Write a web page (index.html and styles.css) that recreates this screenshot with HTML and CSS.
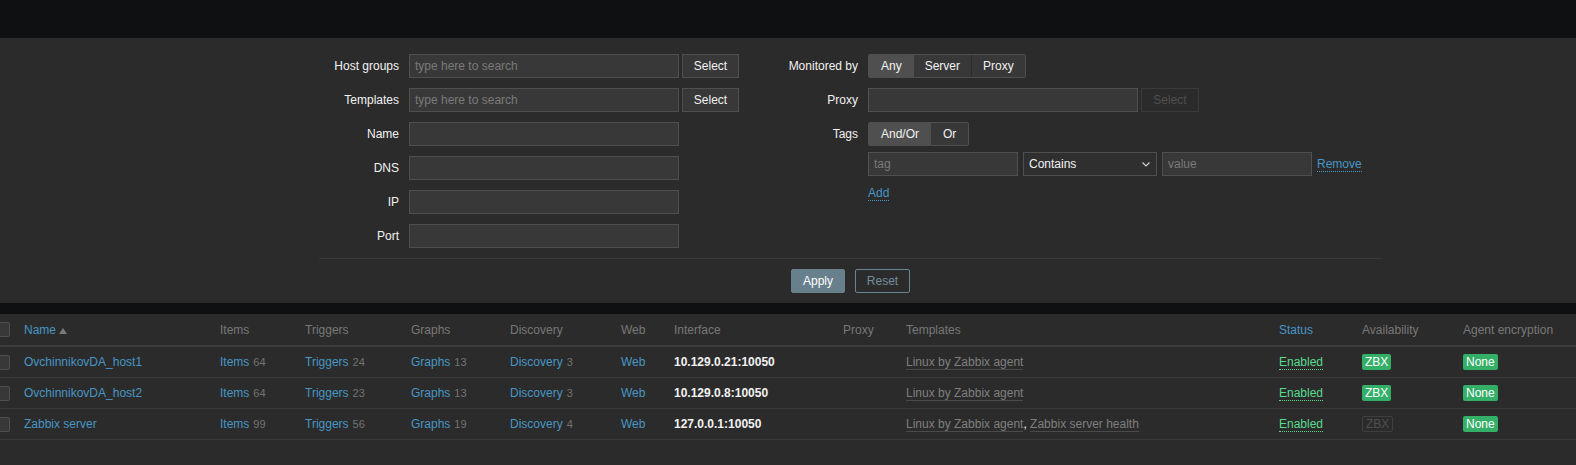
FILE: index.html
```html
<!DOCTYPE html>
<html lang="en">
<head>
<meta charset="utf-8">
<title>Hosts</title>
<link rel="stylesheet" href="styles.css">
</head>
<body>
<div class="topbar"></div>
<form class="filter">
  <div class="filter-inner">
    <div class="filter-cols">
      <div class="col col-left">
        <div class="row"><label class="lbl">Host groups</label><input class="inp w270" placeholder="type here to search"><button type="button" class="btn-sel">Select</button></div>
        <div class="row"><label class="lbl">Templates</label><input class="inp w270" placeholder="type here to search"><button type="button" class="btn-sel">Select</button></div>
        <div class="row"><label class="lbl">Name</label><input class="inp w270"></div>
        <div class="row"><label class="lbl">DNS</label><input class="inp w270"></div>
        <div class="row"><label class="lbl">IP</label><input class="inp w270"></div>
        <div class="row"><label class="lbl">Port</label><input class="inp w270"></div>
      </div>
      <div class="col col-right">
        <div class="row"><label class="lbl">Monitored by</label>
          <div class="seg"><span class="seg-item on">Any</span><span class="seg-item narrow">Server</span><span class="seg-item narrow sep">Proxy</span></div>
        </div>
        <div class="row"><label class="lbl">Proxy</label><input class="inp w270"><button type="button" class="btn-sel disabled" disabled>Select</button></div>
        <div class="row row-tags"><label class="lbl">Tags</label>
          <div class="seg"><span class="seg-item on">And/Or</span><span class="seg-item">Or</span></div>
        </div>
        <div class="row row-tag"><span class="lbl"></span>
          <input class="inp w150" placeholder="tag">
          <button type="button" class="zselect"><span>Contains</span><svg width="8" height="5" viewBox="0 0 8 5"><path d="M0.5 0.5 L4 4 L7.5 0.5" fill="none" stroke="#d8d8d8" stroke-width="1.1"/></svg></button>
          <input class="inp w150" placeholder="value">
          <a class="dlink" href="#">Remove</a>
        </div>
        <div class="row row-add"><span class="lbl"></span><a class="dlink" href="#">Add</a></div>
      </div>
    </div>
    <div class="filter-sep"></div>
    <div class="filter-actions">
      <button type="button" class="btn-apply">Apply</button>
      <button type="button" class="btn-reset">Reset</button>
    </div>
  </div>
</form>
<div class="band"></div>
<table class="list">
  <colgroup>
    <col class="c0"><col class="c1"><col class="c2"><col class="c3"><col class="c4"><col class="c5"><col class="c6"><col class="c7"><col class="c8"><col class="c9"><col class="c10"><col class="c11"><col class="c12">
  </colgroup>
  <thead>
    <tr>
      <th><span class="cb"></span></th>
      <th><a class="link" href="#">Name</a><svg class="sort" width="8" height="6" viewBox="0 0 8 6"><polygon points="4,0 8,6 0,6" fill="#7a7a7a"/></svg></th>
      <th>Items</th>
      <th>Triggers</th>
      <th>Graphs</th>
      <th>Discovery</th>
      <th>Web</th>
      <th>Interface</th>
      <th>Proxy</th>
      <th>Templates</th>
      <th><a class="link" href="#">Status</a></th>
      <th>Availability</th>
      <th>Agent encryption</th>
    </tr>
  </thead>
  <tbody>
    <tr>
      <td><span class="cb"></span></td>
      <td><a class="link" href="#">OvchinnikovDA_host1</a></td>
      <td><a class="link" href="#">Items</a><span class="cnt">64</span></td>
      <td><a class="link" href="#">Triggers</a><span class="cnt">24</span></td>
      <td><a class="link" href="#">Graphs</a><span class="cnt">13</span></td>
      <td><a class="link" href="#">Discovery</a><span class="cnt">3</span></td>
      <td><a class="link" href="#">Web</a></td>
      <td class="iface">10.129.0.21:10050</td>
      <td></td>
      <td><a class="tpl" href="#">Linux by Zabbix agent</a></td>
      <td><a class="enabled" href="#">Enabled</a></td>
      <td><span class="badge">ZBX</span></td>
      <td><span class="badge">None</span></td>
    </tr>
    <tr>
      <td><span class="cb"></span></td>
      <td><a class="link" href="#">OvchinnikovDA_host2</a></td>
      <td><a class="link" href="#">Items</a><span class="cnt">64</span></td>
      <td><a class="link" href="#">Triggers</a><span class="cnt">23</span></td>
      <td><a class="link" href="#">Graphs</a><span class="cnt">13</span></td>
      <td><a class="link" href="#">Discovery</a><span class="cnt">3</span></td>
      <td><a class="link" href="#">Web</a></td>
      <td class="iface">10.129.0.8:10050</td>
      <td></td>
      <td><a class="tpl" href="#">Linux by Zabbix agent</a></td>
      <td><a class="enabled" href="#">Enabled</a></td>
      <td><span class="badge">ZBX</span></td>
      <td><span class="badge">None</span></td>
    </tr>
    <tr>
      <td><span class="cb"></span></td>
      <td><a class="link" href="#">Zabbix server</a></td>
      <td><a class="link" href="#">Items</a><span class="cnt">99</span></td>
      <td><a class="link" href="#">Triggers</a><span class="cnt">56</span></td>
      <td><a class="link" href="#">Graphs</a><span class="cnt">19</span></td>
      <td><a class="link" href="#">Discovery</a><span class="cnt">4</span></td>
      <td><a class="link" href="#">Web</a></td>
      <td class="iface">127.0.0.1:10050</td>
      <td></td>
      <td><a class="tpl" href="#">Linux by Zabbix agent</a><span class="comma">,</span> <a class="tpl" href="#">Zabbix server health</a></td>
      <td><a class="enabled" href="#">Enabled</a></td>
      <td><span class="badge off">ZBX</span></td>
      <td><span class="badge">None</span></td>
    </tr>
  </tbody>
</table>
</body>
</html>
```
FILE: styles.css
```css
* { box-sizing: border-box; }
html, body { margin: 0; padding: 0; background: #2b2b2b; }
body {
  font-family: "Liberation Sans", Arial, sans-serif;
  font-size: 12px;
  color: #f2f2f2;
  overflow: hidden;
}
a { text-decoration: none; }

.topbar { height: 38px; background: #0e1012; }

.filter { background: #2b2b2b; padding: 16px 0 10px; margin: 0; }
.filter-inner { margin-left: 319px; width: 1063px; }
.filter-cols { display: flex; }
.col { display: flex; flex-direction: column; }
.col-left { width: 420px; }
.col-right { flex: 1; }

.row { display: flex; align-items: center; height: 24px; margin-bottom: 10px; }
.col-left .row:last-child { margin-bottom: 0; }
.col-left .lbl { width: 80px; }
.col-right .lbl { width: 119px; }
.lbl { text-align: right; margin-right: 10px; color: #f2f2f2; flex: none; }
.row-tags { margin-bottom: 6px; }
.row-add { height: 14px; margin-bottom: 0; }

.inp {
  height: 24px;
  background: #383838;
  border: 1px solid #4f4f4f;
  color: #f2f2f2;
  font: inherit;
  padding: 0 5px;
  outline: none;
  margin: 0;
}
.inp::placeholder { color: #7a7a7a; }
.w270 { width: 270px; }
.w150 { width: 150px; }

.btn-sel {
  height: 24px;
  width: 57px;
  margin-left: 3px;
  background: #383838;
  border: 1px solid #4f4f4f;
  color: #f2f2f2;
  font: inherit;
  padding: 0;
}
.btn-sel.disabled { background: #2b2b2b; border-color: #3a3a3a; color: #4f4f4f; width: 58px; }

.seg {
  display: flex;
  height: 24px;
  border: 1px solid #4f4f4f;
  border-radius: 2px;
  overflow: hidden;
}
.seg-item {
  display: flex;
  align-items: center;
  padding: 0 12px;
  background: #383838;
  color: #f2f2f2;
}
.seg-item.narrow { padding: 0 11px; }
.seg-item.on { background: #4f4f4f; }
.seg-item.sep { border-left: 1px solid #2b2b2b; }

.zselect {
  display: flex;
  align-items: center;
  justify-content: space-between;
  width: 134px;
  height: 24px;
  margin: 0 5px;
  padding: 0 6px 0 5px;
  background: #2f2f2f;
  border: 1px solid #4f4f4f;
  color: #f2f2f2;
  font: inherit;
}

.dlink {
  color: #4796c4;
  border-bottom: 1px dotted #4796c4;
  line-height: 14px;
  padding-top: 1px;
}
.row-tag .dlink { margin-left: 5px; }

.filter-sep { height: 1px; background: #383838; margin-top: 10px; }
.filter-actions { display: flex; justify-content: center; gap: 10px; margin-top: 10px; }
.btn-apply, .btn-reset {
  height: 24px;
  font: inherit;
  border-radius: 2px;
  padding: 0;
}
.btn-apply { width: 54px; background: #687f8c; border: 1px solid #687f8c; color: #fff; }
.btn-reset { width: 55px; background: transparent; border: 1px solid #6b8594; color: #768d99; }

.band { height: 11px; background: #0e1012; }

.list {
  width: 1576px;
  table-layout: fixed;
  border-collapse: separate;
  border-spacing: 0;
  background: #2b2b2b;
}
.c0 { width: 24px; } .c1 { width: 196px; } .c2 { width: 85px; } .c3 { width: 106px; }
.c4 { width: 99px; } .c5 { width: 111px; } .c6 { width: 53px; } .c7 { width: 169px; }
.c8 { width: 63px; } .c9 { width: 373px; } .c10 { width: 83px; } .c11 { width: 101px; } .c12 { width: 113px; }

.list th {
  height: 33px;
  border-bottom: 2px solid #3c3c3c;
  text-align: left;
  font-weight: normal;
  color: #787878;
  padding: 0;
  vertical-align: middle;
  white-space: nowrap;
}
.list td {
  height: 31px;
  border-bottom: 1px solid #383838;
  padding: 0;
  vertical-align: middle;
  white-space: nowrap;
}
.cb {
  display: block;
  width: 15px;
  height: 15px;
  margin-left: -5px;
  background: #383838;
  border: 1px solid #4f4f4f;
  border-radius: 2px;
}
.link { color: #4796c4; }
.sort { margin-left: 3px; vertical-align: 0px; }
.cnt { color: #737373; font-size: 11px; margin-left: 4px; }
.iface { color: #f2f2f2; font-weight: bold; }
.tpl { color: #7f7f7f; border-bottom: 1px solid #4a4a4a; }
.comma { color: #f2f2f2; }
.enabled { color: #59db8f; border-bottom: 1px dotted #59db8f; }
.badge {
  display: inline-block;
  height: 16px;
  line-height: 16px;
  padding: 0 3px;
  background: #34af67;
  color: #fff;
  border-radius: 2px;
  vertical-align: middle;
}
.badge.off { background: transparent; color: #4f4f4f; border: 1px solid #3f3f3f; line-height: 14px; }
```
